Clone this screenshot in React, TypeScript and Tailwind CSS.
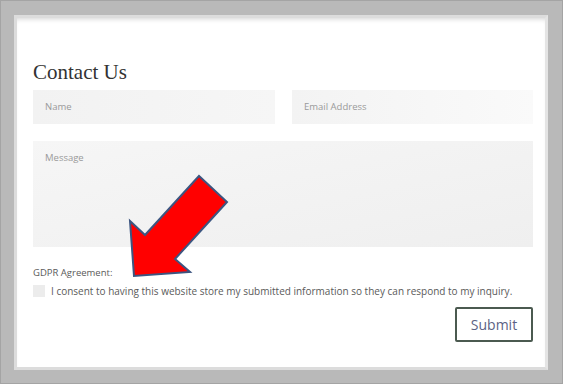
import React from "react";

export default function App() {
  const body = { fontFamily: "'Open Sans', Lato, Arial, sans-serif" } as React.CSSProperties;
  return (
    <div className="relative w-[563px] h-[384px] bg-[#b9b9b9] border border-[#a4a4a4] pt-[14px] pl-[13px] pr-[14px] pb-[13px]" style={body}>
      <div className="w-full h-full border-[3px] border-[#dcdcdc] border-r-[#e4e4e4]">
        <div className="w-full h-full bg-white shadow-[inset_0_4px_5px_-3px_rgba(0,0,0,0.18)] pl-[16px] pr-[12px] pt-[41px] flex flex-col">
          <h1 className="text-[21px] leading-[26px] text-[#333]" style={{ fontFamily: "'Liberation Serif', 'Times New Roman', serif" }}>Contact Us</h1>
          <div className="mt-[5px] flex gap-[17px]">
            <div className="w-[242px] h-[34px] bg-gradient-to-r from-[#f2f2f2] to-[#f6f6f6] flex items-center pl-[12px] text-[9.5px] text-[#9a9a9a]">Name</div>
            <div className="flex-1 h-[34px] bg-gradient-to-r from-[#f3f3f3] to-[#fafafa] flex items-center pl-[12px] text-[9.5px] text-[#9a9a9a]">Email Address</div>
          </div>
          <div className="mt-[17px] h-[106px] bg-gradient-to-br from-[#f6f6f6] to-[#efefef] pl-[12px] pt-[10px] text-[9.5px] text-[#9a9a9a]">Message</div>
          <div className="mt-[20px] text-[9.5px] leading-[12px] text-[#5a5a5a]">GDPR Agreement:</div>
          <div className="mt-[6px] flex items-center gap-[6px]">
            <div className="w-[12px] h-[12px] bg-[#ececec]" />
            <span className="text-[10px] leading-[12px] text-[#5a5a5a]">I consent to having this website store my submitted information so they can respond to my inquiry.</span>
          </div>
          <div className="mt-[10px] flex justify-end">
            <button className="w-[78px] h-[35px] border-2 border-[#4b5a50] rounded-[2px] text-[14px] text-[#5c6284] bg-white">Submit</button>
          </div>
        </div>
      </div>
      <svg className="absolute left-0 top-0" width="563" height="384" viewBox="0 0 563 384">
        <polygon
          points="133,275 129,220 144,234 198,175 226,201 174,258 189,271"
          fill="#ff0000"
          stroke="#3c5580"
          strokeWidth="2"
          strokeLinejoin="miter"
        />
      </svg>
    </div>
  );
}
